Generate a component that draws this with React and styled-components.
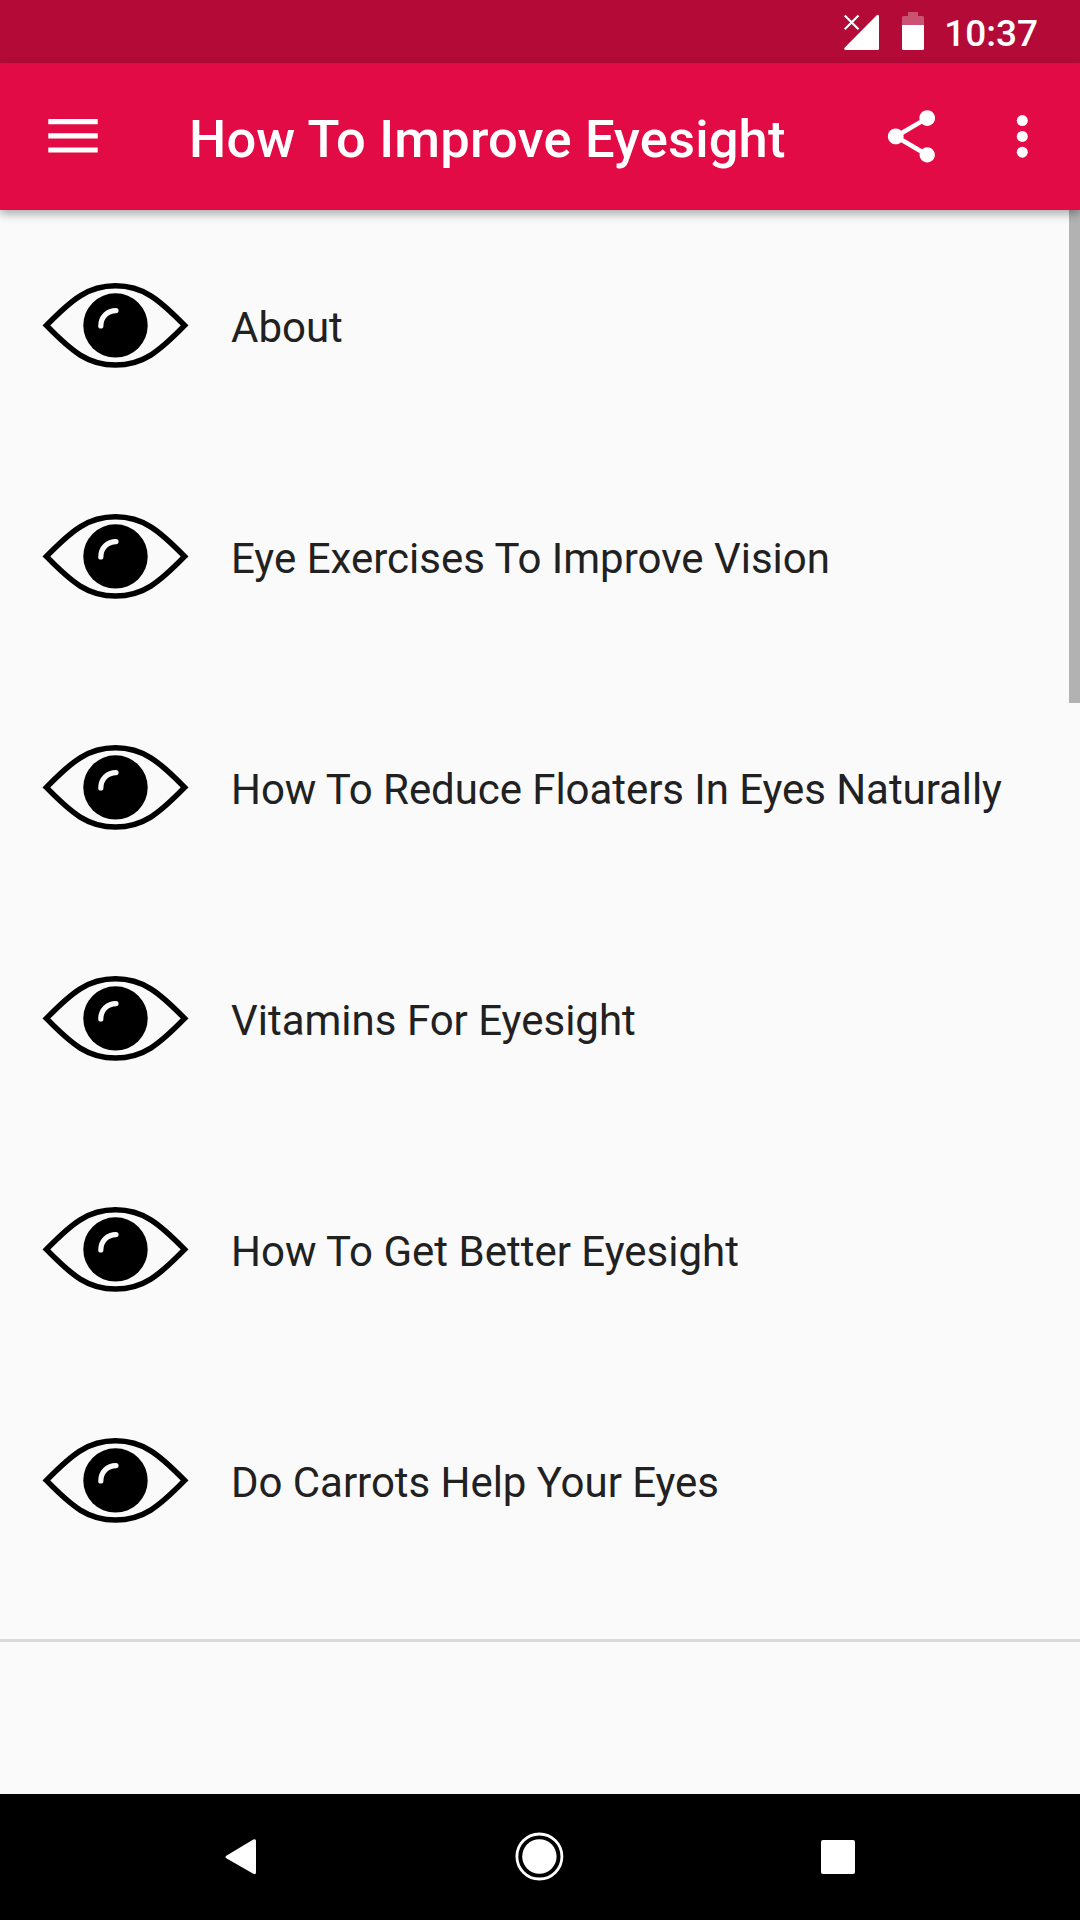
import React from "react";
import styled, { createGlobalStyle } from "styled-components";

const topics = [
  { title: "About" },
  { title: "Eye Exercises To Improve Vision" },
  { title: "How To Reduce Floaters In Eyes Naturally", tracking: "-0.06px" },
  { title: "Vitamins For Eyesight" },
  { title: "How To Get Better Eyesight" },
  { title: "Do Carrots Help Your Eyes", tracking: "-0.04px" },
];

const EyeIcon = () => (
  <svg width="147" height="147" viewBox="0 0 147 147" fill="none">
    <path
      d="M4.4 73.4C30 47.2 46 33.8 73.5 33.8S117 47.2 142.6 73.4C117 99.6 101 113 73.5 113S30 99.6 4.4 73.4Z"
      stroke="#000"
      strokeWidth="5.6"
    />
    <circle cx="73.5" cy="73.4" r="32.2" fill="#000" />
    <path
      d="M58.8 74C58.8 65 65.5 58.6 74 58.6"
      stroke="#fafafa"
      strokeWidth="5.2"
      strokeLinecap="round"
    />
  </svg>
);

const SignalIcon = () => (
  <svg width="36" height="38" viewBox="0 0 36 38">
    <path
      d="M2 38H33.5Q35 38 35 36.5V4.500Q35 1.500 32.5 3.500L.8 35.400Q-.8 38 2 38Z"
      fill="#fff"
    />
    <path d="M.7 3.500L14.500 17.300M14.500 3.500L.7 17.300" stroke="#fff" strokeWidth="2.2" />
  </svg>
);

const BatteryIcon = () => (
  <svg width="22" height="38" viewBox="0 0 22 38">
    <path d="M6 0H16V4H20.500Q22 4 22 5.500V13H0V5.500Q0 4 1.500 4H6Z" fill="#fff" fillOpacity=".3" />
    <path d="M0 13H22V36.500Q22 38 20.500 38H1.500Q0 38 0 36.500Z" fill="#fff" />
  </svg>
);

const MenuIcon = () => (
  <svg width="50" height="35" viewBox="0 0 50 35" fill="#fff">
    <path d="M.3 0H49.700V5.200H.3ZM.3 14.200H49.700V19.400H.3ZM.3 28.400H49.700V33.600H.3Z" />
  </svg>
);

const ShareIcon = () => (
  <svg width="63" height="64" viewBox="0 0 24 24.4" fill="#fff">
    <path d="M18 16.080c-.76 0-1.440.3-1.960.77L8.910 12.700c.05-.23.09-.46.09-.7s-.04-.47-.09-.7l7.050-4.110c.54.5 1.250.81 2.040.81 1.660 0 3-1.340 3-3s-1.340-3-3-3-3 1.340-3 3c0 .24.04.47.09.7L8.040 9.810C7.500 9.310 6.790 9 6 9c-1.660 0-3 1.340-3 3s1.340 3 3 3c.79 0 1.500-.31 2.040-.81l7.120 4.160c-.05.21-.08.43-.08.65 0 1.610 1.310 2.920 2.920 2.920s2.920-1.310 2.920-2.920-1.310-2.920-2.920-2.920z" />
  </svg>
);

const MoreIcon = () => (
  <svg width="12" height="45" viewBox="0 0 12 45" fill="#fff">
    <circle cx="6.3" cy="6.6" r="5.5" />
    <circle cx="6.3" cy="22.4" r="5.5" />
    <circle cx="6.3" cy="38.2" r="5.5" />
  </svg>
);

const App = () => {
  return (
    <>
      <GlobalStyle />
      <Screen>
        <StatusBar>
          <SignalIcon />
          <BatteryIcon />
          <Clock>10:37</Clock>
        </StatusBar>

        <Toolbar>
          <MenuIcon />
          <Title>How To Improve Eyesight</Title>
          <ShareIcon />
          <MoreIcon />
        </Toolbar>

        <Content>
          <List>
            {topics.map(({ title, tracking }) => (
              <Item key={title}>
                <EyeIcon />
                <Label $tracking={tracking}>{title}</Label>
              </Item>
            ))}
          </List>
          <ScrollThumb />
        </Content>

        <NavBar>
          <NavButton>
            <svg width="34" height="38" viewBox="0 0 34 38">
              <path
                d="M2.700 17.500L29.300 1.600Q32 .4 32 3V34Q32 37.200 29.300 35.700L2.700 20.500Q.2 19 2.700 17.500Z"
                fill="#fff"
              />
            </svg>
          </NavButton>
          <NavButton>
            <svg width="50" height="50" viewBox="0 0 50 50">
              <circle cx="24.4" cy="24.5" r="22.5" fill="none" stroke="#fff" strokeWidth="2.8" />
              <circle cx="24.4" cy="24.5" r="17.2" fill="#fff" />
            </svg>
          </NavButton>
          <NavButton>
            <Square />
          </NavButton>
        </NavBar>
      </Screen>
    </>
  );
};

export default App;

const GlobalStyle = createGlobalStyle`
  * {
    box-sizing: border-box;
  }
  body {
    margin: 0;
    font-family: Roboto, sans-serif;
    background: #fafafa;
  }
  svg {
    display: block;
    flex-shrink: 0;
  }
`;

const Screen = styled.div`
  display: flex;
  flex-direction: column;
  width: 1080px;
  height: 1920px;
  overflow: hidden;
  background: #fafafa;
`;

const StatusBar = styled.div`
  display: flex;
  justify-content: flex-end;
  align-items: flex-start;
  height: 63px;
  padding: 12px 42px 0 0;
  background: #b40a37;

  svg + svg {
    margin-left: 22px;
  }
`;

const Clock = styled.div`
  margin-left: 20px;
  color: #fff;
  font-weight: 500;
  font-size: 37px;
  line-height: 43px;
`;

const Toolbar = styled.div`
  display: flex;
  align-items: center;
  position: relative;
  z-index: 2;
  height: 147px;
  padding: 0 52px 0 48px;
  background: #e20b45;
  box-shadow: 0 4px 9px rgba(0, 0, 0, 0.32);
`;

const Title = styled.div`
  flex: 1;
  margin-left: 91px;
  padding-top: 4px;
  color: #fff;
  font-weight: 500;
  font-size: 52.5px;
  line-height: 62px;
  letter-spacing: 0.17px;
  white-space: nowrap;

  & + svg {
    margin-right: 73px;
  }
`;

const Content = styled.div`
  flex: 1;
  position: relative;
`;

const List = styled.div`
  padding-bottom: 43px;
  border-bottom: 3px solid #dadada;
`;

const Item = styled.div`
  display: flex;
  align-items: center;
  height: 231px;
  padding: 0 42px;
`;

const Label = styled.div`
  margin-left: 42px;
  padding-top: 3px;
  color: #212121;
  font-size: 42px;
  line-height: 49px;
  letter-spacing: ${(props) => props.$tracking || "normal"};
  white-space: nowrap;
`;

const ScrollThumb = styled.div`
  position: absolute;
  top: 0;
  right: 0;
  width: 11px;
  height: 493px;
  background: #b2b2b2;
`;

const NavBar = styled.div`
  display: flex;
  justify-content: center;
  height: 126px;
  padding-right: 1px;
  background: #000;
`;

const NavButton = styled.div`
  display: flex;
  justify-content: center;
  align-items: center;
  width: 298.5px;
`;

const Square = styled.div`
  width: 34px;
  height: 34px;
  border-radius: 2px;
  background: #fff;
`;
